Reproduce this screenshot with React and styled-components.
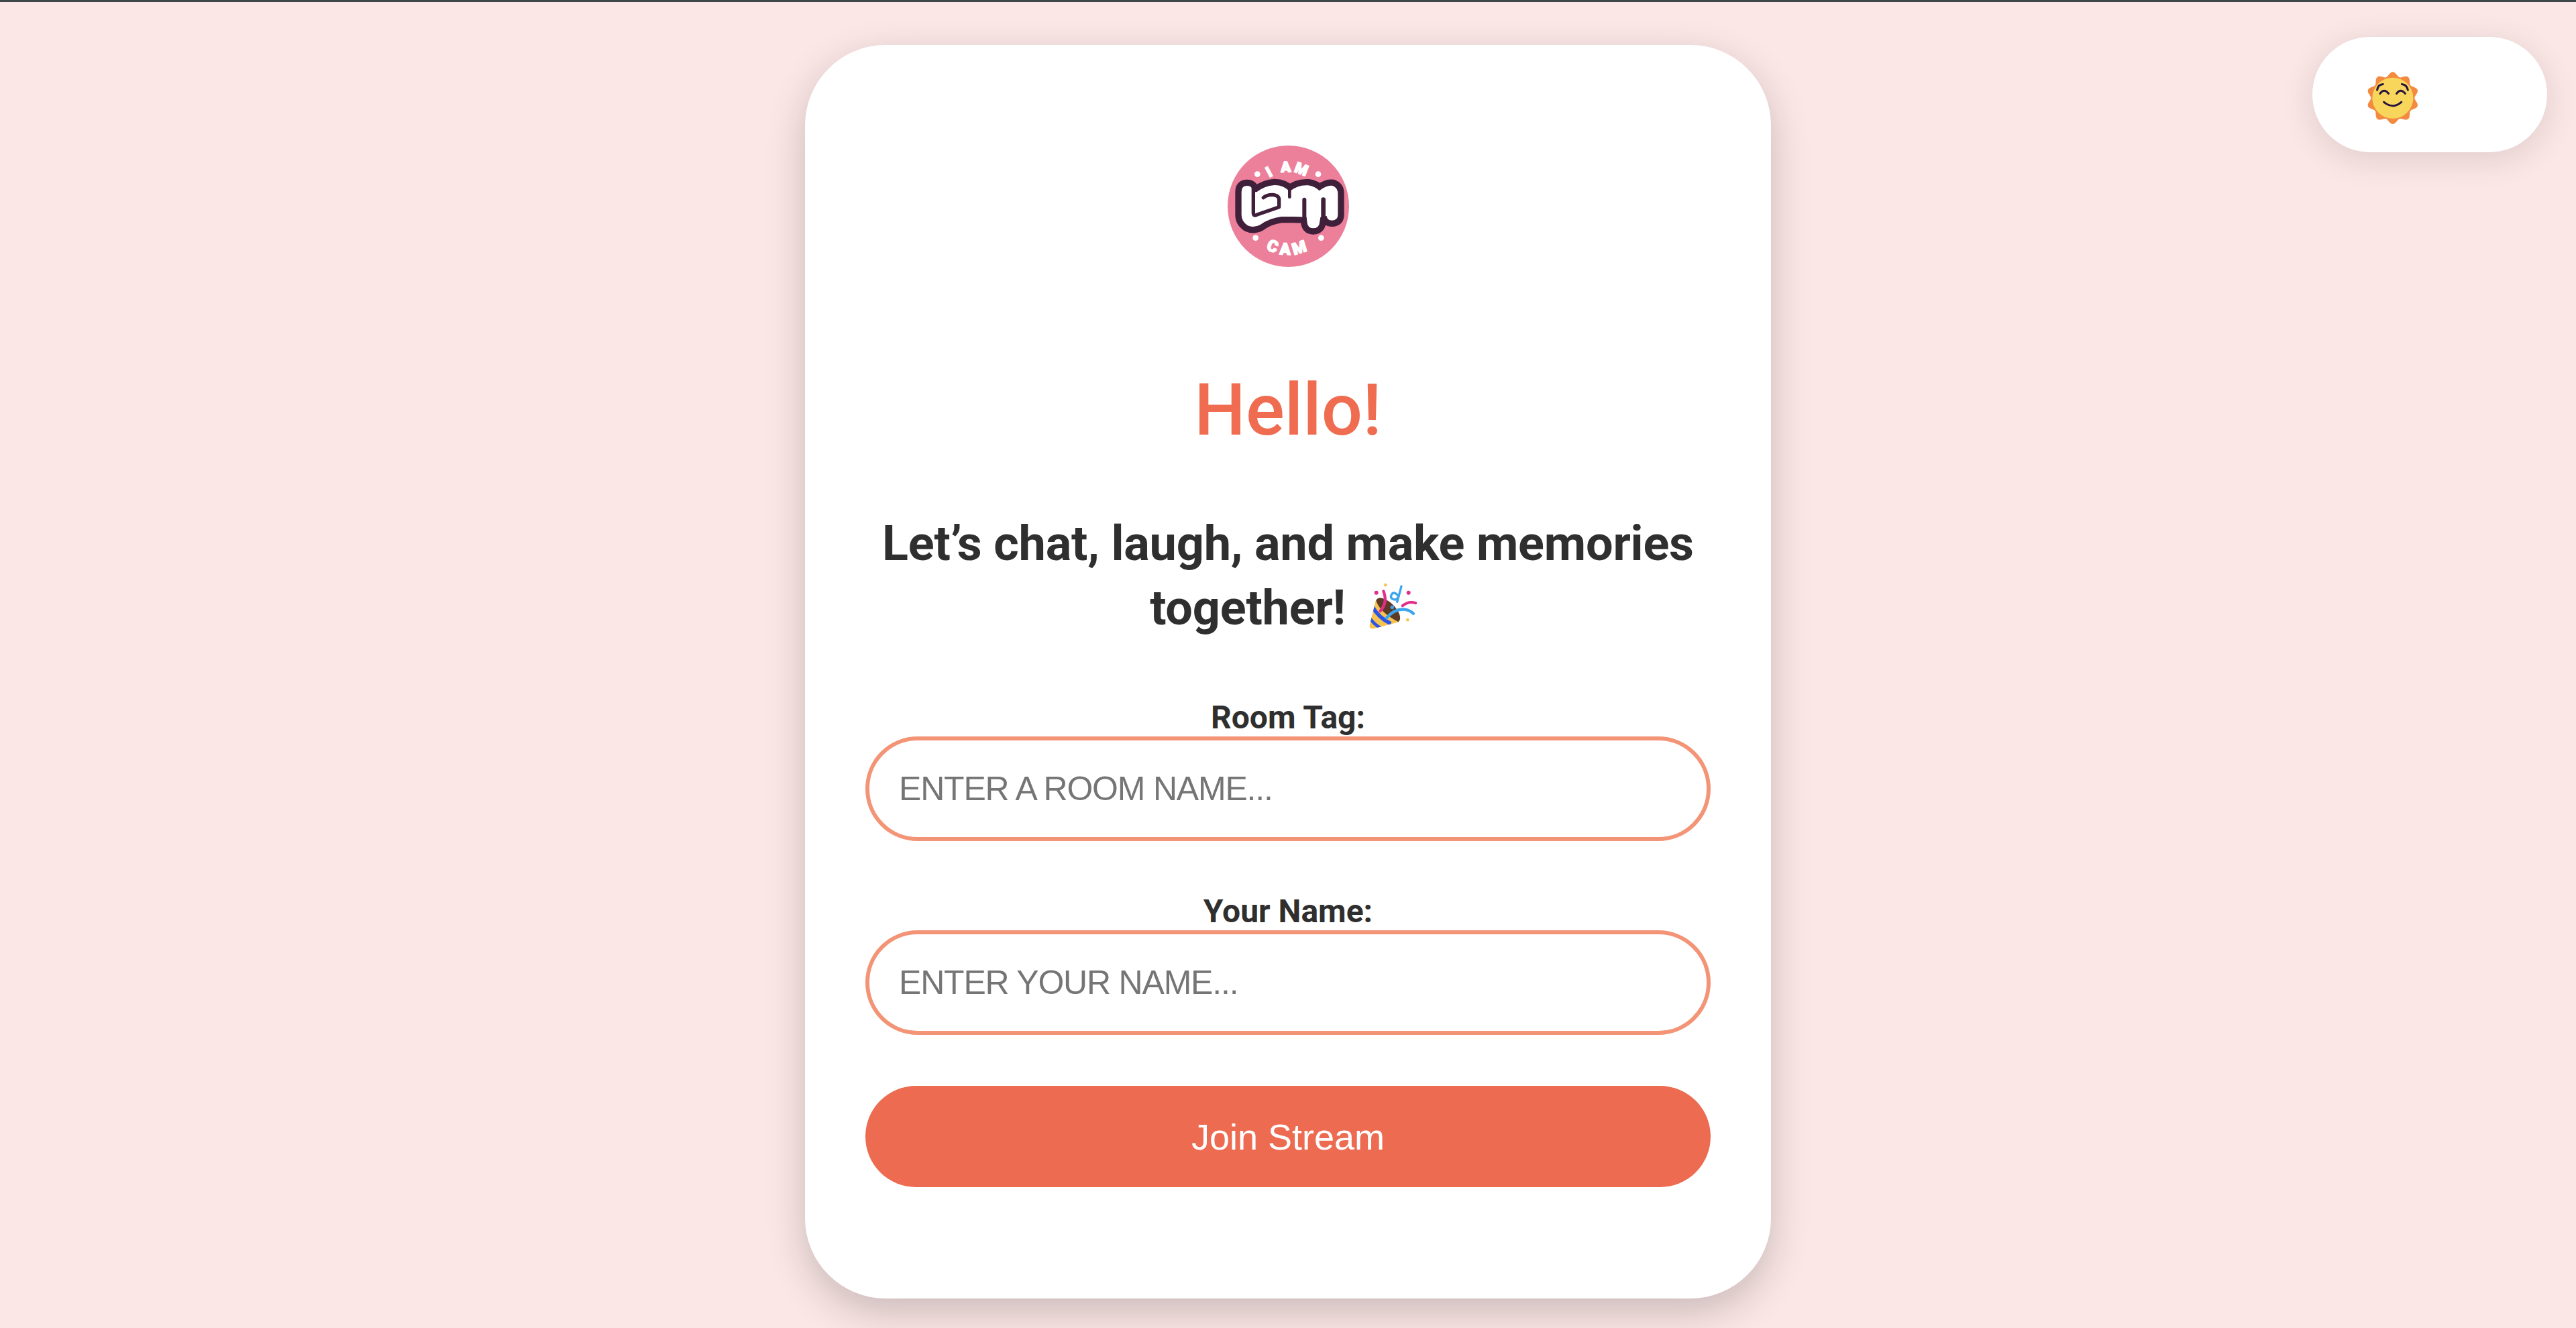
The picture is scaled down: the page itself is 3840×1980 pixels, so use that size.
import React from 'react';
import styled, { createGlobalStyle } from 'styled-components';

const Global = createGlobalStyle`
  html, body { margin: 0; padding: 0; background: #fbe7e6; }
  #root { height: 1980px; overflow: hidden; }
`;
const Page = styled.div`
  position: relative; height: 1980px; box-sizing: border-box; border-top: 3px solid #3b4a49;
  display: flex; justify-content: center; background: #fbe7e6;
`;
const Card = styled.main`
  margin-top: 64px; width: 1440px; height: 1869px; box-sizing: border-box; padding: 150px 90px 0;
  background: #fff; border-radius: 120px; box-shadow: 0 20px 60px rgba(0,0,0,.2);
  display: flex; flex-direction: column; align-items: center;
`;
const LogoSvg = styled.svg`
  width: 181px; height: 181px; flex: none;
`;
const LogoLetters = styled.text`
  font: 900 ${p => p.$size}px Roboto, sans-serif; fill: #fff; stroke: #fff; stroke-width: 5px; stroke-linejoin: round;
  letter-spacing: ${p => p.$spacing}px;
`;
const Hello = styled.h1`
  margin: 151px 0 0; font: 500 108px/124px Roboto, sans-serif; color: #ef6c51;
`;
const Sub = styled.h2`
  margin: 90px 0 0; font: 700 72px/96px Roboto, sans-serif; color: #2f2f2f; text-align: center; letter-spacing: -0.2px;
`;
const Field = styled.label`
  width: 100%; margin-top: ${p => p.$top}px; display: flex; flex-direction: column; align-items: center;
`;
const LabelText = styled.span`
  font: 700 48px/56px Roboto, sans-serif; color: #2f2f2f;
`;
const Input = styled.input`
  width: 100%; height: 156px; box-sizing: border-box; border: 6px solid #f39476; border-radius: 78px; padding: 0 44px;
  font: 50px "Liberation Sans", Arial, sans-serif; letter-spacing: -1.2px; background: #fff;
  &::placeholder { color: #757575; opacity: 1; }
`;
const Join = styled.button`
  width: 100%; height: 151px; margin-top: 76px; border: 0; border-radius: 76px; background: #ed6b50; color: #fff;
  font: 54px "Liberation Sans", Arial, sans-serif;
`;
const Toggle = styled.button`
  position: absolute; left: 3447px; top: 52px; width: 350px; height: 172px; border: 0; border-radius: 86px; background: #fff;
  box-shadow: 0 10px 50px rgba(0,0,0,.12); padding: 10px 0 0 81px; display: flex; align-items: center;
`;
const PartySvg = styled.svg`
  width: 74px; height: 72px; margin: 0 12px 0 34px; vertical-align: -9px;
`;
const SunSvg = styled.svg`
  width: 78px; height: 79px; flex: none;
`;

const bodyPath = 'M47 78Q47 50 72 50Q97 50 97 78L115 78Q150 50 195 47Q235 47 262 75Q300 45 345 48Q375 52 395 72Q430 45 455 50Q480 60 478 90L478 180Q478 205 452 205Q430 205 428 185L400 190L397 210Q395 240 368 240Q342 240 340 210L338 190Q300 188 280 188L225 188Q170 195 130 225Q100 240 75 228Q47 210 47 180Z';

function Logo() {
  return (
    <LogoSvg viewBox="390 110 543 543">
      <defs>
        <path id="arcTop" d="M510 380A152 152 0 0 1 814 380" />
        <path id="arcBottom" d="M444 380A218 218 0 0 0 880 380" />
      </defs>
      <circle cx="661.5" cy="381.5" r="271.5" fill="#ec7f9a" />
      <g transform="translate(405 240)">
        <path d={bodyPath} fill="#3f1f3a" stroke="#3f1f3a" strokeWidth="56" strokeLinejoin="round" />
        <path d={bodyPath} fill="#fff" />
        <g fill="none" stroke="#3f1f3a" strokeLinecap="round" strokeLinejoin="round">
          <path d="M100 45V170Q100 187 115 180L215 145V112Q215 92 185 90Q160 90 145 103" strokeWidth="16" />
          <path d="M262 70V100" strokeWidth="14" />
          <path d="M328 112V195" strokeWidth="18" />
          <path d="M413 112V205" strokeWidth="20" />
        </g>
      </g>
      <g fill="#fff">
        <circle cx="523" cy="238" r="13" />
        <circle cx="795" cy="238" r="13" />
        <circle cx="515" cy="523" r="13" />
        <circle cx="808" cy="523" r="13" />
      </g>
      <LogoLetters $size={66} $spacing={10} textAnchor="middle">
        <textPath href="#arcTop" startOffset="50%">I AM</textPath>
      </LogoLetters>
      <LogoLetters $size={72} $spacing={16} textAnchor="middle">
        <textPath href="#arcBottom" startOffset="50%">CAM</textPath>
      </LogoLetters>
    </LogoSvg>
  );
}

function sunOutline() {
  const pts = [];
  for (let i = 0; i < 240; i++) {
    const a = (i / 240) * Math.PI * 2;
    const r = 107.5 + 9.5 * Math.cos(10 * a);
    pts.push(`${(502 + r * Math.sin(a)).toFixed(1)},${(438 - r * Math.cos(a)).toFixed(1)}`);
  }
  return pts.join(' ');
}

function Sun() {
  return (
    <SunSvg viewBox="385 320 235 238">
      <polygon points={sunOutline()} fill="#f38a3f" />
      <circle cx="502" cy="438" r="92" fill="#f8d65c" />
      <g fill="none" stroke="#26143f" strokeWidth="9" strokeLinecap="round">
        <path d="M445 418Q463 392 483 418" />
        <path d="M519 418Q537 392 558 418" />
        <path d="M432 402Q435 378 458 376" />
        <path d="M570 402Q565 378 543 376" />
        <path d="M462 456Q502 490 541 456" />
      </g>
    </SunSvg>
  );
}

function Party() {
  return (
    <PartySvg viewBox="265 90 222 215">
      <defs>
        <clipPath id="cone"><path d="M298 170Q315 225 400 268L288 297Q268 300 270 283Z" /></clipPath>
      </defs>
      <ellipse cx="352" cy="215" rx="70" ry="33" transform="rotate(45 352 215)" fill="#5c3a26" />
      <path d="M298 170Q315 225 400 268L288 297Q268 300 270 283Z" fill="#f7c44f" />
      <g clipPath="url(#cone)" fill="none" stroke="#2b55e6">
        <path d="M280 195Q310 250 365 275" strokeWidth="17" />
        <path d="M268 245Q285 275 320 295" strokeWidth="14" />
      </g>
      <g fill="none" strokeLinecap="round">
        <path d="M318 218Q352 180 332 130" stroke="#e12e8a" strokeWidth="13" />
        <path d="M412 108Q405 135 393 178" stroke="#3da5ee" strokeWidth="10" />
        <path d="M398 150Q375 125 366 150Q362 165 385 168Q395 165 400 150" stroke="#3da5ee" strokeWidth="10" />
        <path d="M417 195Q445 172 476 183" stroke="#e12e8a" strokeWidth="12" />
        <path d="M345 250Q385 205 430 212Q450 215 466 230" stroke="#3da5ee" strokeWidth="13" />
      </g>
      <circle cx="300" cy="137" r="9" fill="#e12e8a" />
      <circle cx="444" cy="137" r="9" fill="#e12e8a" />
      <circle cx="341" cy="102" r="7" fill="#f7c44f" />
      <circle cx="440" cy="258" r="7" fill="#f7c44f" />
      <circle cx="371" cy="202" r="8" fill="#3da5ee" />
    </PartySvg>
  );
}

export default function App() {
  return (
    <Page>
      <Global />
      <Card>
        <Logo />
        <Hello>Hello!</Hello>
        <Sub>Let’s chat, laugh, and make memories<br />together!<Party /></Sub>
        <Field $top={87}><LabelText>Room Tag:</LabelText><Input placeholder="ENTER A ROOM NAME..." /></Field>
        <Field $top={77}><LabelText>Your Name:</LabelText><Input placeholder="ENTER YOUR NAME..." /></Field>
        <Join>Join Stream</Join>
      </Card>
      <Toggle><Sun /></Toggle>
    </Page>
  );
}
